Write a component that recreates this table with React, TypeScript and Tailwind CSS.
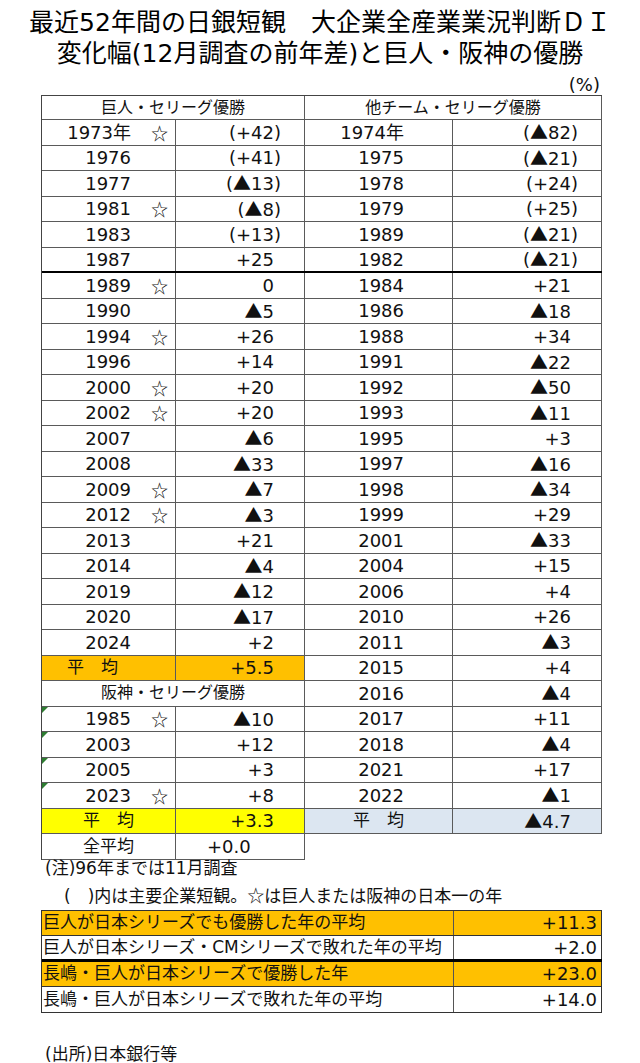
const giants: [string, boolean, string][] = [
  ["1973年", true, "(+42)"],
  ["1976", false, "(+41)"],
  ["1977", false, "(▲13)"],
  ["1981", true, "(▲8)"],
  ["1983", false, "(+13)"],
  ["1987", false, "+25"],
  ["1989", true, "0"],
  ["1990", false, "▲5"],
  ["1994", true, "+26"],
  ["1996", false, "+14"],
  ["2000", true, "+20"],
  ["2002", true, "+20"],
  ["2007", false, "▲6"],
  ["2008", false, "▲33"],
  ["2009", true, "▲7"],
  ["2012", true, "▲3"],
  ["2013", false, "+21"],
  ["2014", false, "▲4"],
  ["2019", false, "▲12"],
  ["2020", false, "▲17"],
  ["2024", false, "+2"],
];

const others: [string, string][] = [
  ["1974年", "(▲82)"],
  ["1975", "(▲21)"],
  ["1978", "(+24)"],
  ["1979", "(+25)"],
  ["1989", "(▲21)"],
  ["1982", "(▲21)"],
  ["1984", "+21"],
  ["1986", "▲18"],
  ["1988", "+34"],
  ["1991", "▲22"],
  ["1992", "▲50"],
  ["1993", "▲11"],
  ["1995", "+3"],
  ["1997", "▲16"],
  ["1998", "▲34"],
  ["1999", "+29"],
  ["2001", "▲33"],
  ["2004", "+15"],
  ["2006", "+4"],
  ["2010", "+26"],
  ["2011", "▲3"],
  ["2015", "+4"],
  ["2016", "▲4"],
  ["2017", "+11"],
  ["2018", "▲4"],
  ["2021", "+17"],
  ["2022", "▲1"],
];

const hanshin: [string, boolean, string][] = [
  ["1985", true, "▲10"],
  ["2003", false, "+12"],
  ["2005", false, "+3"],
  ["2023", true, "+8"],
];

const summary: [string, string, boolean][] = [
  ["巨人が日本シリーズでも優勝した年の平均", "+11.3", true],
  ["巨人が日本シリーズ・CMシリーズで敗れた年の平均", "+2.0", false],
  ["長嶋・巨人が日本シリーズで優勝した年", "+23.0", true],
  ["長嶋・巨人が日本シリーズで敗れた年の平均", "+14.0", false],
];

// the triangle comes from the CJK font, as in the sheet
function Tri() {
  return <span className="font-['Noto_Sans_CJK_JP',sans-serif] text-[18px]">▲</span>;
}

// keeps plain numbers lined up with the ones in brackets
function Val({ v }: { v: string }) {
  const paren = v.startsWith("(");
  const parts = v.split("▲");
  return (
    <span>
      {parts.map((p, i) => (
        <span key={i}>
          {i > 0 && <Tri />}
          {p}
        </span>
      ))}
      {!paren && <span className="invisible">)</span>}
    </span>
  );
}

function GreenMark() {
  return (
    <span className="absolute top-0 left-0 w-0 h-0 border-t-[6px] border-t-[#2e7d32] border-r-[6px] border-r-transparent" />
  );
}

function Star() {
  return <span className="absolute right-[7px] font-['Noto_Sans_CJK_JP',sans-serif] text-[17px]">☆</span>;
}

function LeftRow({
  year,
  star,
  value,
  thick,
  mark,
}: {
  year: string;
  star: boolean;
  value: string;
  thick?: boolean;
  mark?: boolean;
}) {
  const bb = thick ? "border-b-2 border-b-black" : "border-b border-b-[#5a5a5a]";
  return (
    <div className={`flex h-[25.5px] text-[18px] ${bb}`}>
      <div className="relative w-[134px] flex items-center justify-end pr-[44px] border-r border-[#5a5a5a]">
        {mark && <GreenMark />}
        {year}
        {star && <Star />}
      </div>
      <div className="w-[129px] flex items-center justify-end pr-[23px] border-r border-[#5a5a5a]">
        <Val v={value} />
      </div>
    </div>
  );
}

function RightRow({ year, value, thick }: { year: string; value: string; thick?: boolean }) {
  const bb = thick ? "border-b-2 border-b-black" : "border-b border-b-[#5a5a5a]";
  return (
    <div className={`flex h-[25.5px] text-[18px] ${bb}`}>
      <div className="w-[148px] flex items-center justify-end pr-[48px] border-r border-[#5a5a5a]">
        {year}
      </div>
      <div className="w-[149px] flex items-center justify-end pr-[23px] border-r border-[#5a5a5a]">
        <Val v={value} />
      </div>
    </div>
  );
}

export default function App() {
  return (
    <div className="w-[640px] h-[1063px] bg-white text-[#111] font-['DejaVu_Sans','Noto_Sans_CJK_JP',sans-serif] text-[17px] overflow-hidden">
      <div className="pt-[7px] h-[69px] text-center text-[25px] leading-[31px] text-black">
        <div>最近52年間の日銀短観　大企業全産業業況判断ＤＩ</div>
        <div>変化幅(12月調査の前年差)と巨人・阪神の優勝</div>
      </div>
      <div className="h-[26px] flex items-end justify-end pr-[40px] leading-[20px] text-[18px]">(%)</div>

      <div className="flex items-start ml-[41px]">
        <div className="w-[264px] border-l border-t border-[#444]">
          <div className="h-[24px] flex items-center justify-center text-[16px] border-b border-r border-[#5a5a5a]">
            巨人・セリーグ優勝
          </div>
          {giants.map(([y, s, v], i) => (
            <LeftRow key={y} year={y} star={s} value={v} thick={i === 5} />
          ))}
          <div className="flex h-[25.5px] text-[18px] bg-[#ffc000] border-b border-b-[#5a5a5a]">
            <div className="w-[134px] flex items-center pl-[25px] text-[17px] border-r border-[#5a5a5a]">平　均</div>
            <div className="w-[129px] flex items-center justify-end pr-[23px] border-r border-[#5a5a5a]">
              <Val v="+5.5" />
            </div>
          </div>
          <div className="h-[25.5px] flex items-center justify-center text-[16px] border-b border-r border-[#5a5a5a]">
            阪神・セリーグ優勝
          </div>
          {hanshin.map(([y, s, v]) => (
            <LeftRow key={y} year={y} star={s} value={v} mark />
          ))}
          <div className="flex h-[25.5px] text-[18px] bg-[#ffff00] border-b border-b-[#5a5a5a]">
            <div className="w-[134px] flex items-center justify-center text-[17px] border-r border-[#5a5a5a]">平　均</div>
            <div className="w-[129px] flex items-center justify-end pr-[23px] border-r border-[#5a5a5a]">
              <Val v="+3.3" />
            </div>
          </div>
          <div className="flex h-[25.5px] text-[18px] border-b border-b-[#5a5a5a]">
            <div className="w-[134px] flex items-center justify-center text-[17px] border-r border-[#5a5a5a]">全平均</div>
            <div className="w-[129px] flex items-center pl-[31px] border-r border-[#5a5a5a]">+0.0</div>
          </div>
        </div>

        <div className="w-[297px] border-t border-[#444]">
          <div className="h-[24px] flex items-center justify-center text-[16px] border-b border-r border-[#5a5a5a]">
            他チーム・セリーグ優勝
          </div>
          {others.map(([y, v], i) => (
            <RightRow key={y + i} year={y} value={v} thick={i === 5} />
          ))}
          <div className="flex h-[25.5px] text-[18px] bg-[#dce6f1] border-b border-b-[#5a5a5a]">
            <div className="w-[148px] flex items-center justify-center text-[17px] border-r border-[#5a5a5a]">平　均</div>
            <div className="w-[149px] flex items-center justify-end pr-[23px] border-r border-[#5a5a5a]">
              <Val v="▲4.7" />
            </div>
          </div>
        </div>
      </div>

      <div className="pl-[45px] leading-[17px]">(注)96年までは11月調査</div>
      <div className="pl-[64px] mt-[9px] leading-[17px]">
        (　)内は主要企業短観。<span className="font-['Noto_Sans_CJK_JP',sans-serif]">☆</span>は巨人または阪神の日本一の年
      </div>

      <div className="ml-[41px] mt-[5px] w-[561px] border-l border-t border-[#333]">
        {summary.map(([t, v, o], i) => (
          <div
            key={t}
            className={`flex h-[25.5px] ${o ? "bg-[#ffc000]" : "bg-white"} ${
              i === 1 ? "border-b-[3px] border-b-black" : "border-b border-b-[#333]"
            }`}
          >
            <div className="w-[412px] flex items-center pl-[1px] border-r border-[#555] whitespace-nowrap">{t}</div>
            <div className="w-[148px] flex items-center justify-end pr-[4px] text-[18px] border-r border-[#333]">{v}</div>
          </div>
        ))}
      </div>

      <div className="pl-[45px] mt-[32px] leading-[18px]">(出所)日本銀行等</div>
    </div>
  );
}
